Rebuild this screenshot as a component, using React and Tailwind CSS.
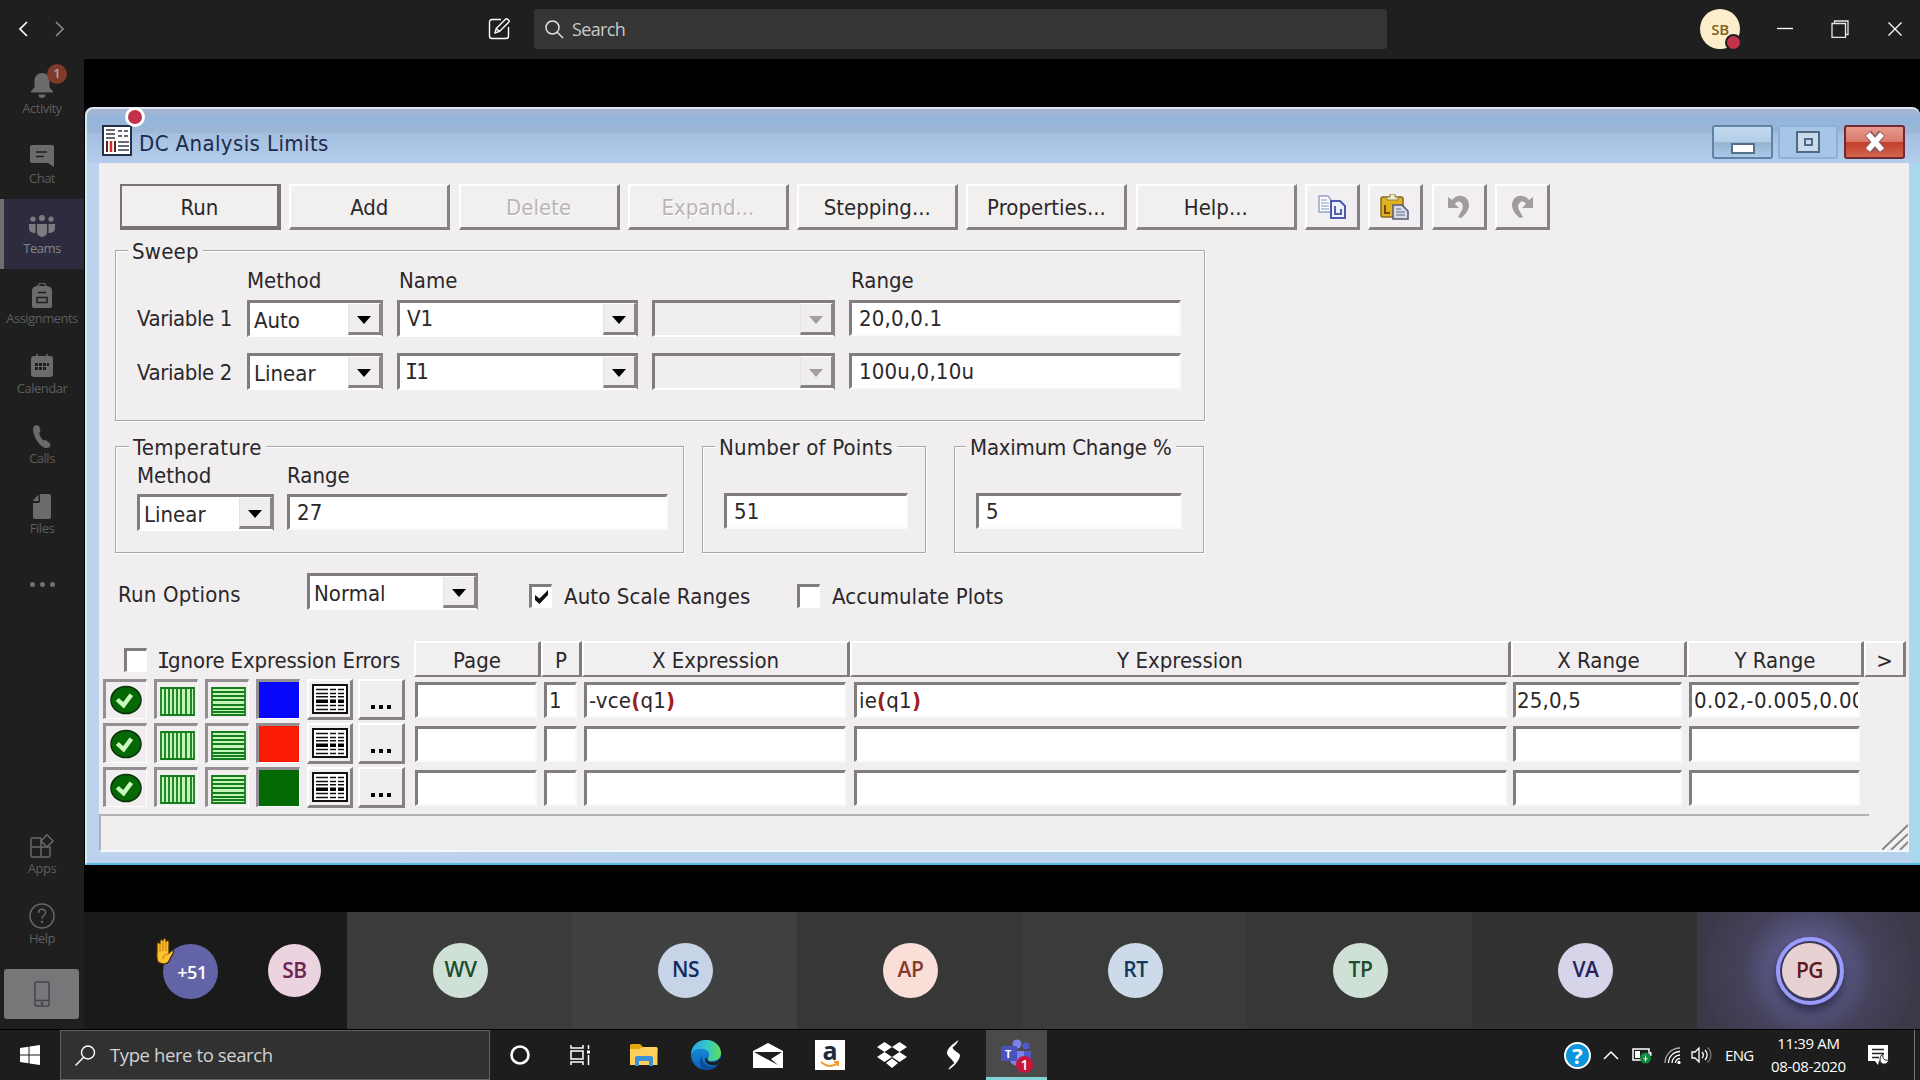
import React from "react";

const cols = "grid grid-cols-[96px_136px_241px_183px_332px] gap-x-[14px]";
const raised = "border-t-2 border-l-2 border-r-[3px] border-b-[3px] border-t-white border-l-white border-r-[#868284] border-b-[#868284]";
const sunken = "border-t-[3px] border-l-[3px] border-r-2 border-b-2 border-t-[#817d7f] border-l-[#817d7f] border-r-[#fbf9fb] border-b-[#fbf9fb]";

function Combo({ text, disabled, className = "" }) {
  return (
    <div className={`flex h-[37px] justify-between border-t-[3px] border-l-[3px] border-r-2 border-b-2 border-t-[#817d7f] border-l-[#817d7f] border-r-[#8a8688] border-b-white ${disabled ? "bg-[#f1eef0]" : "bg-white"} ${className}`}>
      <span className="pt-[5px] pl-[4px] leading-[26px]">{text}</span>
      <span className="flex h-full w-[33px] items-center justify-center border-t border-l border-r-2 border-b-[3px] border-t-white border-l-[#e6e3e5] border-r-[#8a8688] border-b-[#868284] bg-[#f0edef] pt-[3px]">
        <svg width="14" height="8" viewBox="0 0 14 8"><path d="M0 0h14L7 8z" fill={disabled ? "#a19da0" : "#000"} /></svg>
      </span>
    </div>
  );
}

function Field({ text, className = "" }) {
  return (
    <div className={`h-9 overflow-hidden whitespace-nowrap bg-white pl-[7px] leading-8 tracking-[0.2px] ${sunken} ${className}`}>{text}</div>
  );
}

function Btn({ children, off }) {
  return (
    <div className={`flex h-[46px] w-[161px] shrink-0 items-center justify-center pt-[3px] bg-[#f2efef] ${raised} ${off ? "text-[#b9b5b7] [text-shadow:1px_1px_0_#fff]" : ""}`}>{children}</div>
  );
}

function IconBtn({ children }) {
  return <div className={`flex h-[46px] w-[55px] shrink-0 items-center justify-center bg-[#f1eff1] ${raised}`}>{children}</div>;
}

/* Capital I with serifs, as the dialog font draws it */
const SerifI = () => <span className="-mx-[2px] inline-block font-['DejaVu_Sans_Mono',monospace]">I</span>;

function Group({ title, legend, className, children }) {
  return (
    <div className={`relative border border-[#aaa7a9] shadow-[1px_1px_0_#fff,inset_1px_1px_0_#fff] ${className}`}>
      <span className={`absolute -top-[12px] bg-[#f1eef0] px-1 leading-[26px] whitespace-nowrap ${legend}`}>{title}</span>
      {children}
    </div>
  );
}

function Check({ on }) {
  return (
    <div className="flex h-6 w-[23px] shrink-0 items-center justify-center border-t-[3px] border-l-[3px] border-r border-b border-t-[#817d7f] border-l-[#817d7f] border-r-white border-b-white bg-white">
      {on && <svg width="15" height="14" viewBox="0 0 15 14"><path d="M1 5v5l4.500 4L14 5V0L5.500 8.500z" fill="#111" /></svg>}
    </div>
  );
}

function SideItem({ label, active, children }) {
  return (
    <div className={`flex h-[70px] w-full flex-col items-center text-[13px] ${active ? "border-l-4 border-[#6f6f73] bg-[#2d2c3f] pr-1 text-[#858588]" : "text-[#5d5d5d]"}`}>
      <div className="mt-[14px] flex h-[26px] items-center justify-center">{children}</div>
      <span className="leading-[18px] tracking-[-0.5px]">{label}</span>
    </div>
  );
}

function Sidebar() {
  const f = "#6b6b6b";
  return (
    <div className="flex w-[84px] shrink-0 flex-col bg-[#1f1f1f]">
      <SideItem label="Activity">
        <div className="relative">
          <svg width="24" height="26" viewBox="0 0 24 26" fill={f}><path d="M12 0a7.500 7.500 0 0 0-7.500 8v6.500L1 18v1.500h22V18l-3.500-3.500V8A7.500 7.500 0 0 0 12 0zM8.500 21.500h7a3.500 3.500 0 0 1-7 0z" /></svg>
          <div className="absolute -top-[9px] left-[17px] flex h-[20px] w-[20px] items-center justify-center rounded-full bg-[#7f3a2b] text-[13px] font-semibold text-[#a9a9a9]">1</div>
        </div>
      </SideItem>
      <SideItem label="Chat">
        <svg width="26" height="24" viewBox="0 0 26 24"><path d="M3 1h20a2 2 0 0 1 2 2v20l-6-4H3a2 2 0 0 1-2-2V3a2 2 0 0 1 2-2z" fill={f} /><path d="M7 8h11M7 12.500h8" stroke="#1f1f1f" strokeWidth="1.500" /></svg>
      </SideItem>
      <SideItem label="Teams" active>
        <svg width="26" height="24" viewBox="0 0 26 24" fill="#7c7c80"><circle cx="4" cy="5" r="2.600" /><circle cx="13" cy="4" r="3" /><circle cx="22" cy="5" r="2.600" /><path d="M8 10h10v8a5 5 0 0 1-10 0zM0 10h6.500v9C3 19 0 18 0 14zM19.500 10H26v4c0 4-3 5-6.500 5z" /></svg>
      </SideItem>
      <SideItem label="Assignments">
        <svg width="22" height="26" viewBox="0 0 22 26"><path d="M7 4a4 4 0 0 1 8 0" fill="none" stroke={f} strokeWidth="1.500" /><path d="M6 3h10a5 5 0 0 1 5 6v14a2 2 0 0 1-2 2H3a2 2 0 0 1-2-2V9a5 5 0 0 1 5-6z" fill={f} /><path d="M7 9.500h8M6 14.500h10v5H6z" fill="none" stroke="#1f1f1f" strokeWidth="1.500" /></svg>
      </SideItem>
      <SideItem label="Calendar">
        <svg width="22" height="24" viewBox="0 0 22 24"><path d="M6 0v3M16 0v3" stroke={f} strokeWidth="1.500" /><rect y="2" width="22" height="21" rx="3" fill={f} /><path d="M8 9h3v3H8zM12 9h3v3h-3zM16 9h2v3h-2zM4 13h3v3H4zM8 13h3v3H8zM12 13h3v3h-3zM4 9h3v3H4z" fill="#1f1f1f" /></svg>
      </SideItem>
      <SideItem label="Calls">
        <svg width="18" height="23" viewBox="0 0 18 23" fill={f}><path d="M1 1c2-1.500 5-1 5.500 1l.8 3.500c.2 1-.3 2-1.300 2.700 1 3 2.300 5.300 4.500 7.200 1-.6 2-.5 2.800.1l3.200 2.500c2 1.800.5 5-3 5C6 23-3 6 1 1z" /></svg>
      </SideItem>
      <SideItem label="Files">
        <svg width="20" height="25" viewBox="0 0 20 25" fill={f}><path d="M8 0h9a2 2 0 0 1 2 2v21a2 2 0 0 1-2 2H3a2 2 0 0 1-2-2V9h5a2 2 0 0 0 2-2zM6.500.5V7H.8z" /></svg>
      </SideItem>
      <div className="mt-[33px] flex h-[5px] justify-center gap-[5px]">
        <i className="h-[5px] w-[5px] rounded-full bg-[#707070]" /><i className="h-[5px] w-[5px] rounded-full bg-[#707070]" /><i className="h-[5px] w-[5px] rounded-full bg-[#707070]" />
      </div>
      <div className="mt-[232px]">
        <SideItem label="Apps">
          <svg width="24" height="24" viewBox="0 0 24 24" fill="none" stroke="#686868" strokeWidth="1.500"><path d="M11 4H2.500A1.500 1.500 0 0 0 1 5.500v16A1.500 1.500 0 0 0 2.500 23h16a1.500 1.500 0 0 0 1.500-1.500V13H1M11 4v19" /><path d="M17 .8 23 7l-6 6-6-6z" /></svg>
        </SideItem>
        <SideItem label="Help">
          <svg width="26" height="26" viewBox="0 0 26 26" fill="none" stroke="#686868" strokeWidth="1.500"><circle cx="13" cy="13" r="12" /><path d="M9.500 10c0-5 7-5 7-.5 0 3-3.500 3-3.500 6" /><path d="M13 18v2" strokeWidth="2" /></svg>
        </SideItem>
      </div>
      <div className="mt-[10px] ml-1 flex h-[50px] w-[75px] items-center justify-center rounded-[3px] bg-[#77777a]">
        <svg width="16" height="26" viewBox="0 0 16 26" fill="none" stroke="#45454a" strokeWidth="1.500"><rect x="1" y="1" width="14" height="24" rx="1.500" /><path d="M1 19.500h14" /><circle cx="8" cy="22.300" r=".8" /></svg>
      </div>
    </div>
  );
}

function TopBar() {
  return (
    <div className="flex h-[59px] shrink-0 items-center bg-[#1f1f1f] pb-px">
      <svg className="ml-[19px]" width="9" height="16" viewBox="0 0 9 16" fill="none" stroke="#fff" strokeWidth="1.600"><path d="M8 1 1 8l7 7" /></svg>
      <svg className="ml-[27px]" width="9" height="16" viewBox="0 0 9 16" fill="none" stroke="#888" strokeWidth="1.600"><path d="m1 1 7 7-7 7" /></svg>
      <svg className="ml-[424px]" width="22" height="22" viewBox="0 0 22 22" fill="none" stroke="#fff" strokeWidth="1.400"><path d="M13 1.500H4A2.500 2.500 0 0 0 1.500 4v14A2.500 2.500 0 0 0 4 20.500h14a2.500 2.500 0 0 0 2.500-2.500V9" /><path d="m7 15 1.200-4.500L17.500 1.200a1.500 1.500 0 0 1 2.200 0l1 1a1.500 1.500 0 0 1 0 2L11.500 13.500zM8.200 10.500l3.300 3" /></svg>
      <div className="ml-[24px] flex h-10 w-[853px] items-center rounded-[3px] bg-[#353535]">
        <svg className="ml-[11px]" width="19" height="19" viewBox="0 0 19 19" fill="none" stroke="#e2e2e2" strokeWidth="1.500"><circle cx="7.500" cy="7.500" r="6.500" /><path d="m12 12 6 6" /></svg>
        <span className="ml-[8px] pt-px text-[18px] tracking-[-0.65px] text-[#c8c8c8]">Search</span>
      </div>
      <div className="relative ml-[313px] flex h-10 w-10 items-center justify-center rounded-full bg-[#fceecb] text-[15px] font-semibold tracking-[-0.3px] text-[#80601b]">SB
        <i className="absolute top-[25px] left-[25px] h-[17px] w-[17px] rounded-full border-2 border-[#1f1f1f] bg-[#c4314b]" />
      </div>
      <svg className="ml-[37px]" width="16" height="20"><path d="M0 9.500h16" stroke="#fff" strokeWidth="1.300" /></svg>
      <svg className="ml-[38px]" width="18" height="18" fill="none" stroke="#e8e8e8" strokeWidth="1.300"><path d="M1 3.500h13.500v14H1zM3.500 3.500V1h13.500v13.500h-2.500" /></svg>
      <svg className="ml-[39px]" width="14" height="14" stroke="#fff" strokeWidth="1.300"><path d="m.5.500 13 13M13.500.5l-13 13" /></svg>
    </div>
  );
}

const grid = { v: "M1 1h33v27H1zM5 1v27M9 1v27M13 1v27M17 1v27M21 1v27M26 1v27M31 1v27", h: "M1 1h33v27H1zM1 5h33M1 9h33M1 13h33M1 18h33M1 22h33M1 25h33" };

function Row({ color, p, x, y, xr, yr }) {
  const cell = "flex h-10 w-11 items-center justify-center border-t-[3px] border-l-[3px] border-t-[#938f92] border-l-[#938f92] border-r border-b border-r-white border-b-white";
  return (
    <div className="flex h-10 pl-1">
      <div className={cell}>
        <svg width="32" height="30" viewBox="0 0 33 30"><ellipse cx="16.500" cy="15" rx="15.500" ry="14" fill="#046804" stroke="#0a310a" strokeWidth="1.500" /><path d="m7.500 14.500 6.500 6L22 9.500" fill="none" stroke="#cdf8bd" strokeWidth="4.500" /></svg>
      </div>
      <div className={`${cell} ml-[7px] pt-[3px] pl-px`}><svg width="35" height="29"><path d={grid.v} fill="#c3f7ba" stroke="#167b1c" strokeWidth="1.800" /></svg></div>
      <div className={`${cell} ml-[7px] pt-[3px] pl-px`}><svg width="35" height="29"><path d={grid.h} fill="#c3f7ba" stroke="#167b1c" strokeWidth="1.800" /></svg></div>
      <div className={`${cell} ml-[7px] ${color}`} />
      <div className={`ml-[7px] flex h-[41px] w-[46px] items-center justify-center ${raised}`}>
        <svg width="36" height="30"><path d="M1 1h34v28H1z" fill="#fff" stroke="#111" strokeWidth="2" /><path d="M4 5.500h12M18 5.500h6M26 5.500h6M4 9.500h12M18 9.500h6M26 9.500h6M4 12.800h12M18 12.800h6M26 12.800h6M4 21.500h12M18 21.500h6M26 21.500h6M4 25.500h12M18 25.500h6M26 25.500h6" stroke="#111" strokeWidth="1.600" /><path d="M4 17.200h12M18 17.200h6M26 17.200h6" stroke="#000" strokeWidth="3.500" /></svg>
      </div>
      <div className={`ml-[5px] flex h-[41px] w-[47px] items-center justify-center gap-1 pt-[15px] ${raised}`}>
        <i className="h-[4px] w-[4px] bg-black" /><i className="h-[4px] w-[4px] bg-black" /><i className="h-[4px] w-[4px] bg-black" />
      </div>
      <Field className="mt-[3px] ml-[10px] w-[122px] shrink-0" />
      <Field className="mt-[3px] ml-[7px] w-[33px] shrink-0 !pl-[2px]" text={p} />
      <Field className="mt-[3px] ml-[7px] w-[262px] shrink-0 !pl-[2px]" text={x} />
      <Field className="mt-[3px] ml-[8px] w-[653px] shrink-0 !pl-[2px]" text={y} />
      <Field className="mt-[3px] ml-[6px] w-[169px] shrink-0 !pl-[1px]" text={xr} />
      <Field className="mt-[3px] ml-[7px] w-[171px] shrink-0 !pl-[2px] !tracking-[0.4px]" text={yr} />
    </div>
  );
}

const Paren = ({ children }) => <b className="font-bold text-[#9c1f22]">{children}</b>;

function Head({ children, className }) {
  return <div className={`flex h-9 shrink-0 items-center justify-center border-t-2 border-l-2 border-r-[3px] border-b-2 border-t-white border-l-white border-r-[#817d7f] border-b-[#817d7f] bg-[#f2eff0] pt-[3px] ${className}`}>{children}</div>;
}

function Dialog() {
  return (
    <div className="relative mt-12 ml-px flex h-[758px] w-[1835px] flex-col rounded-t-[8px] border-t-2 border-l-2 border-b-2 border-t-[#dce8f5] border-l-[#d5ecf5] border-b-[#58b9e0] bg-[#b9d1ee] bg-[linear-gradient(90deg,#bdd2ee,#bdd2ee_12px,#b7d2ee_1820px,#9fdcee)] font-['DejaVu_Sans_Condensed','DejaVu_Sans',sans-serif] text-[22px] leading-[26px] tracking-[0px] text-[#2b282b] [font-stretch:90%]">
      <i className="absolute -top-[2px] left-[38px] z-10 h-5 w-5 rounded-full border-[3px] border-white bg-[#c4314b]" />
      <div className="flex h-[54px] shrink-0 rounded-t-[7px] bg-[linear-gradient(#a9b5cd_0,#92b5dc_10px,#9db5d6_23px,#a5bfe1_25px,#b4cdec_54px)]">
        <svg className="mt-[16px] ml-[15px]" width="30" height="31" viewBox="0 0 30 31"><rect x="1" y="1" width="28" height="29" fill="#fff" stroke="#22304a" strokeWidth="2" /><path d="M4 5h9M4 9h9M4 13h9M16 6h4M22 6h4M16 11h4M22 11h4M16 17h11M16 21h11M16 25h11" stroke="#686a73" strokeWidth="2" /><path d="M5 16v11M13 16v11" stroke="#5b2222" strokeWidth="2" /><path d="M9 16v11" stroke="#c8302a" strokeWidth="2.500" /></svg>
        <span className="mt-[22px] ml-[7px] tracking-[0.4px] text-[#1d2a4a]">DC Analysis Limits</span>
        <div className="mt-[16px] ml-auto flex h-[34px] w-[61px] items-center justify-center rounded-[3px] border-2 border-[#5f83a8] bg-[linear-gradient(#c3daf0_0,#b3cde6_50%,#95b3d0_52%,#a9cbe8)] pt-[13px]"><i className="h-[11px] w-6 border-2 border-[#56708c] bg-white" /></div>
        <div className="mt-[16px] ml-[5px] flex h-[34px] w-[60px] items-center justify-center rounded-[3px] border-2 border-[#8fb1d4] bg-[#a5c6e6]"><i className="flex h-[22px] w-6 items-center justify-center border-2 border-[#4f6a86] bg-[#c8dbea]"><i className="h-[8px] w-[9px] border-2 border-[#4f6a86]" /></i></div>
        <div className="mt-[16px] mr-[15px] ml-[6px] flex h-[34px] w-[61px] items-center justify-center rounded-[3px] border-2 border-[#6d2a34] bg-[linear-gradient(#e8998d_0,#d97b6c_48%,#c33f2b_52%,#d4654f)]">
          <svg width="24" height="22" viewBox="0 0 24 22"><path d="m5 2 14 18M19 2 5 20" stroke="#8c5a60" strokeWidth="8" /><path d="m5 3 14 16M19 3 5 19" stroke="#fff" strokeWidth="5.500" /></svg>
        </div>
      </div>
      <div className="mr-[11px] ml-[12px] flex h-[689px] flex-col bg-[#f1eef0]">
        <div className="mt-[21px] ml-[21px] flex h-[46px] gap-[8.3px]">
          <div className="flex h-[46px] w-[161px] items-center justify-center border-2 border-r-4 border-b-4 border-[#777375] bg-[#f2efef] pt-[3px]">Run</div>
          <Btn>Add</Btn><Btn off>Delete</Btn><Btn off>Expand...</Btn><Btn>Stepping...</Btn><Btn>Properties...</Btn><Btn>Help...</Btn>
          <IconBtn><svg width="28" height="24" viewBox="0 0 28 24"><path d="M1 1h9l3 4v12H1z" fill="#fff" stroke="#98a3c4" strokeWidth="1.500" /><path d="M3 5h6M3 8h8M3 11h8M3 14h8" stroke="#8291b8" strokeWidth="1.200" /><path d="M13 6h9l5 5v12H13z" fill="#eef2ff" stroke="#4e59ad" strokeWidth="2" /><path d="M17 11v8h6v-5" fill="none" stroke="#5663b5" strokeWidth="2" /></svg></IconBtn>
          <IconBtn><svg width="30" height="26" viewBox="0 0 30 26"><rect x="1" y="3" width="22" height="20" rx="2" fill="#dfb022" stroke="#8a6a18" strokeWidth="1.500" /><path d="M7 6V3h3V0h5v3h3v3z" fill="#f3edcf" stroke="#8d8049" /><path d="M5 11v8h5" fill="none" stroke="#6e4d0b" strokeWidth="2" /><path d="M13 11h9l6 6v8H13z" fill="#d9dbe8" stroke="#55586e" strokeWidth="1.500" /><path d="M16 15h5M16 18h9M16 21h9" stroke="#8a8da4" strokeWidth="1.500" /></svg></IconBtn>
          <IconBtn><svg width="24" height="25" viewBox="0 0 24 25"><path d="M1 3v11h11L8 10c4-6 10 0 7 6l-4 7 3 1c8-6 10-14 6-19-4-5-11-4-15 1z" fill="#a19c9f" /></svg></IconBtn>
          <IconBtn><svg width="24" height="25" viewBox="0 0 24 25"><path d="M23 3v11H12l4-4c-4-6-10 0-7 6l4 7-3 1C2 18 0 10 4 5c4-5 11-4 15 1z" fill="#a19c9f" /></svg></IconBtn>
        </div>
        <Group title="Sweep" legend="left-[12px] tracking-[0.2px]" className="mt-5 ml-4 h-[171px] w-[1090px] pl-[21px]">
          <div className={`mt-[17px] h-[26px] ${cols}`}><span>{" "}</span><span>Method</span><span className="pl-[2px]">Name</span><span /><span className="pl-[2px]">Range</span></div>
          <div className={`mt-[6px] ${cols}`}><span className="pt-[6px] tracking-[-0.4px]">Variable 1</span><Combo text="Auto" /><Combo text={<span className="relative -top-[2px] left-[3px]">V1</span>} /><Combo disabled /><Field text="20,0,0.1" /></div>
          <div className={`mt-[16px] ${cols}`}><span className="pt-[7px] tracking-[-0.4px]">Variable 2</span><Combo text="Linear" /><Combo text={<span className="relative -top-[2px] left-[3px]"><SerifI />1</span>} /><Combo disabled /><Field text="100u,0,10u" /></div>
        </Group>
        <div className="mt-[25px] ml-4 flex h-[107px]">
          <Group title="Temperature" legend="left-[13px] tracking-[0.35px]" className="w-[569px] pl-[21px]">
            <div className="mt-[16px] flex h-[26px]"><span className="w-[150px]">Method</span><span>Range</span></div>
            <div className="mt-[5px] flex gap-[13px]"><Combo text="Linear" className="w-[137px]" /><Field text="27" className="w-[381px]" /></div>
          </Group>
          <Group title="Number of Points" legend="left-[12px] tracking-[0.2px]" className="ml-[18px] w-[224px] pl-[21px]"><Field text="51" className="mt-[46px] w-[184px]" /></Group>
          <Group title="Maximum Change %" legend="left-[11px] tracking-[-0.2px]" className="ml-[28px] w-[250px] pl-[21px]"><Field text="5" className="mt-[46px] w-[206px]" /></Group>
        </div>
        <div className="mt-[20px] ml-[19px] flex h-[37px]">
          <span className="w-[189px] pt-[9px] tracking-[0.2px]">Run Options</span>
          <Combo text="Normal" className="w-[171px]" />
          <div className="mt-[11px] ml-[51px] flex"><Check on /><span className="ml-[12px] w-[233px] tracking-[0.1px]">Auto Scale Ranges</span><Check /><span className="ml-[12px] tracking-[0.05px]">Accumulate Plots</span></div>
        </div>
        <div className="mt-[31px] flex h-9">
          <div className="flex w-[315px] pt-[7px] pl-[25px]"><Check /><span className="ml-[12px] whitespace-nowrap tracking-[-0.15px]"><SerifI />gnore Expression Errors</span></div>
          <Head className="w-[127px]">Page</Head><Head className="w-[41px]">P</Head><Head className="w-[268px]">X Expression</Head><Head className="w-[661px]">Y Expression</Head><Head className="w-[176px]">X Range</Head><Head className="w-[177px]">Y Range</Head><Head className="w-[42px]">&gt;</Head>
        </div>
        <div className="mt-[2px] flex flex-col gap-1">
          <Row color="bg-[#0707fb]" p="1" x={<>-vce<Paren>(</Paren>q1<Paren>)</Paren></>} y={<>ie<Paren>(</Paren>q1<Paren>)</Paren></>} xr="25,0,5" yr="0.02,-0.005,0.00" />
          <Row color="bg-[#fb1b05]" />
          <Row color="bg-[#046b04]" />
        </div>
        <div className="mt-[7px] flex h-[38px] justify-between border-l-2 border-b-2 border-l-[#b3b0b5] border-b-[#f0f9fa]">
          <div className="w-[1768px] border-t-2 border-[#b4b1b3]" />
          <svg className="mt-[10px] mr-[1px]" width="26" height="26"><path d="M0 26 26 1M9 26 26 10M18 26l8-8" stroke="#8b888b" strokeWidth="2" /><path d="M3 26 26 4M12 26l14-13" stroke="#fff" /></svg>
        </div>
      </div>
    </div>
  );
}

function Avatar({ t, c, size = "h-[55px] w-[55px]" }) {
  return <div className={`flex items-center justify-center rounded-full text-[21px] font-semibold tracking-[-0.5px] ${size} ${c}`}>{t}</div>;
}

const people = [
  ["WV", "bg-[#3b3b3b]", "bg-[#cfe1d6] text-[#1d4c2f]"],
  ["NS", "bg-[#404040]", "bg-[#c7d4e8] text-[#0e2d62]"],
  ["AP", "bg-[#373737]", "bg-[#fadfd9] text-[#863b2d]"],
  ["RT", "bg-[#3b3b3b]", "bg-[#cddaea] text-[#14375f]"],
  ["TP", "bg-[#373737]", "bg-[#cfe1d6] text-[#1d4c2f]"],
  ["VA", "bg-[#323232]", "bg-[#d6d4e9] text-[#2a2459]"],
];

function Strip() {
  return (
    <div className="mt-[47px] flex h-[117px]">
      <div className="flex w-[263px] items-center bg-[#1a1a1a] pl-[79px]">
        <div className="relative mt-[2px]">
          <div className="flex h-[55px] w-[55px] items-center justify-center rounded-full bg-[#6264a7] pt-px pl-[3px] text-[18px] font-semibold tracking-[-0.5px] text-white">+51</div>
          <svg className="absolute -top-[7px] -left-[8px]" width="20" height="30" viewBox="0 0 20 30"><path d="M3 25C1 21 2 17 2 13V7c0-2 3-2 3 0V4c0-2 3-2 3 0V3c0-2.500 3-2.500 3 0v2c0-2.200 3-2.200 3 0v11l2-2c1.500-1 3 0 2.500 1.500L15 22c-1 3-2.500 5-6 5-3 0-5-1-6-2z" fill="#fbc12f" stroke="#3a2606" strokeWidth="1.200" /><path d="M5 7v8M8 4v10M11 5v9M8 22c0-3 2-5 5-5" stroke="#c3750f" fill="none" /></svg>
        </div>
        <div className="ml-[50px]"><Avatar t="SB" c="bg-[#ebd3e0] text-[#6d2453]" size="h-[53px] w-[53px]" /></div>
      </div>
      {people.map(([t, bg, c]) => <div key={t} className={`flex w-[225px] shrink-0 items-center justify-center pb-px pl-[2px] ${bg}`}><Avatar t={t} c={c} /></div>)}
      <div className="flex w-[223px] items-center justify-center bg-[radial-gradient(circle_at_50%_50%,#6a679f_0,#5a5784_35px,#45435c_65px,#3b3948_110px)] pl-[2px]">
        <div className="flex h-[68px] w-[68px] items-center justify-center rounded-full border-[4px] border-[#9a9cfb] bg-[#39395b] shadow-[0_6px_10px_rgba(20,20,40,0.6)]"><Avatar t="PG" c="bg-[#e8d1d2] text-[#5d191f]" /></div>
      </div>
    </div>
  );
}

function Taskbar() {
  return (
    <div className="flex h-[51px] items-center border-t border-black bg-[#1d1d1d] text-white">
      <svg className="ml-5" width="20" height="20" viewBox="0 0 20 20" fill="#fff"><path d="M0 3l8.500-1.200v7.700H0zM9.500 1.600 20 0v9.500H9.500zM0 10.500h8.500v7.700L0 17zM9.500 10.500H20V20L9.500 18.400z" /></svg>
      <div className="ml-5 flex h-[50px] w-[430px] items-center border border-[#626262] bg-[#313131]">
        <svg className="ml-[14px]" width="21" height="21" viewBox="0 0 21 21" fill="none" stroke="#fff" strokeWidth="1.400"><circle cx="13" cy="7.500" r="6.500" /><path d="M8.500 12.500.5 20.500" /></svg>
        <span className="ml-[14px] text-[18.500px] tracking-[-0.4px] text-[#d2d2d2]">Type here to search</span>
      </div>
      <svg className="ml-[20px]" width="20" height="20"><circle cx="10" cy="10" r="8.500" fill="none" stroke="#fff" strokeWidth="2.600" /></svg>
      <svg className="ml-[40px]" width="21" height="20" fill="none" stroke="#fff" strokeWidth="1.500"><path d="M1 0v3h12V0M1 6h12v8H1zM1 20v-3h12v3M18.500 0v4M18.500 10v10" /><path d="M17 7h3" strokeWidth="3" /></svg>
      <svg className="ml-[39px]" width="28" height="24" viewBox="0 0 28 24"><path d="M0 2.500A1.500 1.500 0 0 1 1.500 1H10l3 3h13a1.500 1.500 0 0 1 1.500 1.500V9H0z" fill="#e8a70b" /><path d="M0 6h10l3-2h13a1.500 1.500 0 0 1 1.500 1.500V22H0z" fill="#fcd05a" /><path d="M5 22v-7a2 2 0 0 1 2-2h14a2 2 0 0 1 2 2v8h-4v-5h-10v5H5z" fill="#3b92d8" /></svg>
      <svg className="ml-[33px]" width="30" height="30" viewBox="0 0 30 30"><defs><linearGradient id="e1"><stop offset="0" stopColor="#2ba7e8" /><stop offset=".55" stopColor="#37c7c4" /><stop offset="1" stopColor="#60dd55" /></linearGradient><linearGradient id="e2" x2="0" y2="1"><stop offset="0" stopColor="#1b9de2" /><stop offset="1" stopColor="#0b5db8" /></linearGradient></defs><circle cx="15" cy="15" r="15" fill="url(#e2)" /><path d="M0 14C1 5 7 0 15 0c9 0 15 6 15 13 0 5-4 8-9 8-4 0-5-2-4-3 2-2 2-8-5-9C6 8 2 10 0 14z" fill="url(#e1)" /><path d="M11 16c-1 6 4 11 10 11 3 0 6-1 7-3-3 4-7 6-12 6-7-1-9-9-5-14z" fill="#0a4a94" /><path d="M17 17c-2 3 0 5 4 5 4 0 7-2 9-5-.5 3-1 5-3 7-6 3-13 0-13-5z" fill="#1d1d1d" /></svg>
      <svg className="ml-[32px]" width="30" height="26" viewBox="0 0 30 26"><path d="M0 9 15 1l15 8v17H0z" fill="#fff" /><path d="M1 10h28L18 17l7 6L10 15z" fill="#1d1d1d" /></svg>
      <div className="relative ml-[32px] flex h-[30px] w-[30px] items-center justify-center bg-white pb-[9px] text-[25px] font-bold text-[#1f2c3f]">a
        <svg className="absolute top-[21px] left-[5px]" width="20" height="7"><path d="M1 1c6 5 12 5 17 1M14 1h4v4" fill="none" stroke="#f59a22" strokeWidth="1.800" /></svg>
      </div>
      <svg className="ml-[32px]" width="30" height="26" viewBox="0 0 30 26" fill="#fff"><path d="m7.500 0 7.500 5-7.500 5L0 5zM22.500 0 30 5l-7.500 5L15 5zM7.500 10l7.500 5-7.500 5L0 15zM22.500 10l7.500 5-7.500 5-7.500-5zM15 16.500l6 4.500-6 5-6-5z" /></svg>
      <svg className="ml-[39px]" width="15" height="30" viewBox="0 0 15 30" fill="#fff"><path d="M12.500 0C7 4 1 8 1 13c0 3 5 6 8 11 3-3 5-6 5-8.500 0-2.500-7-5-7.500-8 2.500-2 5-4 6-7.500zM14 15.500c0 4-6 7.500-8 9.500-2 1.500-3 3-3.500 5C8 26.500 13.500 20.500 14 15.500z" /></svg>
      <div className="relative ml-[25px] flex h-[50px] w-[61px] items-center justify-center border-b-[3px] border-[#83d3d6] bg-[#4a4a4a]">
        <svg width="32" height="30" viewBox="0 0 32 30"><circle cx="16" cy="5" r="4.500" fill="#7b83eb" /><circle cx="25" cy="7" r="3.500" fill="#5059c9" /><path d="M20 12h10v9a5 5 0 0 1-8 4z" fill="#5059c9" /><path d="M9 12h14v9c0 7-13 8-14 0z" fill="#7b83eb" /><rect x="0" y="7" width="16" height="15" rx="1" fill="#4b53bc" /></svg>
        <span className="absolute top-[17px] left-[19px] text-[11px] leading-[14px] font-bold">T</span>
        <i className="absolute top-[26px] left-[30px] flex h-[17px] w-[17px] items-center justify-center rounded-full bg-[#c8143c] text-[14px] font-semibold not-italic">1</i>
      </div>
      <div className="ml-[517px] flex h-[27px] w-[27px] items-center justify-center rounded-full border-2 border-white bg-[#0a95dc] text-[22px] leading-none font-bold">?</div>
      <svg className="ml-[12px]" width="16" height="10" fill="none" stroke="#fff" strokeWidth="1.500"><path d="m1 9 7-7 7 7" /></svg>
      <svg className="ml-[13px]" width="20" height="18" viewBox="0 0 20 18"><path d="M1 3h16v11H1z" fill="none" stroke="#fff" strokeWidth="1.500" /><path d="M3 5h5v7H3zM18 6h1.500v4H18z" fill="#fff" /><circle cx="13.500" cy="12" r="5.500" fill="#10893e" /><path d="M13.500 9.500v6M11.500 12l2 2 2-2" stroke="#fff" fill="none" /></svg>
      <svg className="ml-[12px]" width="17" height="17" viewBox="0 0 17 17" fill="none" stroke="#fff" strokeWidth="1.300"><path d="M1 16A15 15 0 0 1 16 1" stroke="#aaa" /><path d="M4.500 16A11.500 11.500 0 0 1 16 4.500M8 16a8 8 0 0 1 8-8M11.500 16a4.500 4.500 0 0 1 4.500-4.500" /><circle cx="15" cy="15.500" r="1" fill="#fff" /></svg>
      <svg className="ml-[10px]" width="21" height="18" viewBox="0 0 21 18" fill="none" stroke="#fff" strokeWidth="1.300"><path d="M1 6h3l4-4v14l-4-4H1zM11 6a4 4 0 0 1 0 6" /><path d="M14 4a7 7 0 0 1 0 10" /><path d="M16.500 1.500a10 10 0 0 1 0 15" stroke="#777" /></svg>
      <span className="ml-[13px] text-[15px] tracking-[-0.7px]">ENG</span>
      <div className="ml-[15px] w-[80px] text-center text-[15px] leading-[23px] tracking-[-0.35px] whitespace-nowrap">11:39 AM<br />08-08-2020</div>
      <svg className="ml-[20px]" width="22" height="21" viewBox="0 0 22 21"><path d="M0 0h20v16h-9l-1 4-3-4H0z" fill="#fff" /><path d="M4 4.500h12M4 8.500h12M4 12.500h7" stroke="#222" strokeWidth="1.500" /><path d="M15 9c-1 5 2 7 6 6-2 6-9 5-9 0 0-3 1-5 3-6z" fill="#fff" stroke="#222" /></svg>
      <i className="mr-[5px] ml-auto h-full w-px bg-[#777]" />
    </div>
  );
}

export default function App() {
  return (
    <div className="flex h-[1080px] w-[1920px] flex-col overflow-hidden bg-black font-['Open_Sans','Noto_Sans',sans-serif]">
      <TopBar />
      <div className="flex h-[970px] shrink-0">
        <Sidebar />
        <div className="flex w-[1836px] flex-col">
          <Dialog />
          <Strip />
        </div>
      </div>
      <Taskbar />
    </div>
  );
}
